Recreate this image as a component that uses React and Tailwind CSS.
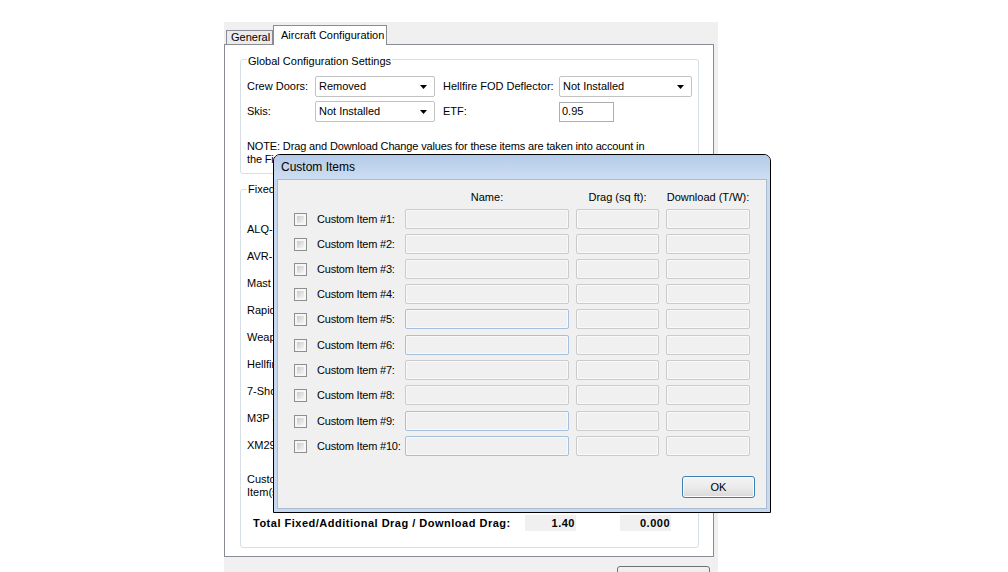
import React from 'react'

const fixedItems = [
  'ALQ-144 IR Jammer:',
  'AVR-2 Laser Detecting Set:',
  'Mast Mounted Sight:',
  'Rapid Deployment Kit:',
  'Weapon Pylons:',
  'Hellfire Launcher(s):',
  '7-Shot Rocket Pod(s):',
  'M3P and Ammunition:',
  'XM296 .50 Cal Gun:',
]

const customItems = Array.from({ length: 10 }, (_, i) => `Custom Item #${i + 1}:`)

function Arrow() {
  return (
    <svg width="7" height="4" viewBox="0 0 7 4">
      <path d="M0 0h7L3.5 4z" fill="#000" />
    </svg>
  )
}

function Combo({ value, width }) {
  return (
    <div className={`flex h-[21px] items-center justify-between rounded-[2px] border border-[#c2c2c2] bg-white pl-[3px] pr-[7px] ${width}`}>
      <span>{value}</span>
      <Arrow />
    </div>
  )
}

function Checkbox() {
  return (
    <div className="h-[13px] w-[13px] shrink-0 border border-[#8e8f8f] bg-[#f6f6f6] p-[2px]">
      <div className="h-full w-full bg-linear-to-br from-[#cbcbcb] to-[#f6f6f6]" />
    </div>
  )
}

function Field({ width, blue }) {
  return (
    <div
      className={`h-[20px] shrink-0 rounded-[2px] border bg-[#f0f0f0] shadow-[inset_0_0_0_1px_#f9f9f9] ${width} ${
        blue ? 'border-[#a3c0de]' : 'border-[#cbcbcb]'
      }`}
    />
  )
}

export default function App() {
  return (
    <div className="relative h-[572px] w-[1008px] overflow-hidden bg-white pl-[224px] pt-[22px] font-['Liberation_Sans',Arial,sans-serif] text-[11px] leading-[13px] text-black">
      {/* main window */}
      <div className="flex w-[494px] flex-col bg-[#f0f0f0]">
        <div className="flex h-[22px] shrink-0 items-end pl-[2px]">
          <div className="flex h-[14px] w-[47px] items-center border border-b-0 border-[#898c95] bg-[#ebebeb] pl-[4px]">
            General
          </div>
          <div className="relative z-10 -mb-[1px] h-[20px] w-[114px] border border-b-0 border-[#898c95] bg-white pl-[7px] pt-[3px]">
            Aircraft Configuration
          </div>
        </div>

        <div className="h-[513px] w-[490px] shrink-0 border border-[#898c95] bg-white px-[15px] pt-[8px]">
          <fieldset className="h-[121px] w-[459px] rounded-[3px] border border-[#d5dfe5] px-[6px] pt-[10px]">
            <legend className="px-[1px]">
              <span className="relative top-[2px]">Global Configuration Settings</span>
            </legend>
            <div className="flex h-[21px] items-center">
              <span className="w-[68px]">Crew Doors:</span>
              <Combo value="Removed" width="w-[120px]" />
              <span className="ml-[8px] w-[116px]">Hellfire FOD Deflector:</span>
              <Combo value="Not Installed" width="w-[133px]" />
            </div>
            <div className="mt-[4px] flex h-[21px] items-center">
              <span className="w-[68px]">Skis:</span>
              <Combo value="Not Installed" width="w-[120px]" />
              <span className="ml-[8px] w-[116px]">ETF:</span>
              <div className="flex h-[20px] w-[55px] items-center border border-[#abadb3] bg-white pl-[2px]">0.95</div>
            </div>
            <p className="mt-[18px] w-[405px] tracking-[-0.14px]">
              NOTE: Drag and Download Change values for these items are taken into account in the Fixed/Additional Drag totals.
            </p>
          </fieldset>

          <fieldset className="mt-[9px] h-[365px] w-[459px] rounded-[3px] border border-[#d5dfe5] px-[6px] pt-[20px]">
            <legend className="px-[1px]">Fixed/Additional Items</legend>
            {fixedItems.map((item) => (
              <div key={item} className="flex h-[27px] items-center">
                {item}
              </div>
            ))}
            <div className="mt-[14px] w-[60px]">
              <div>Custom</div>
              <div>Item(s):</div>
            </div>
            <div className="mt-[16px] flex h-[16px] items-center pl-[6px] font-bold tracking-[0.5px]">
              <span className="w-[272px]">Total Fixed/Additional Drag / Download Drag:</span>
              <span className="flex h-[16px] w-[51px] items-center justify-end bg-[#f0f0f0] pr-[1px]">1.40</span>
              <span className="ml-[44px] flex h-[16px] w-[51px] items-center justify-end bg-[#f0f0f0] pr-[1px]">0.000</span>
            </div>
          </fieldset>
        </div>

        <div className="h-[15px] shrink-0">
          <div className="ml-[393px] mt-[9px] h-[20px] w-[93px] rounded-[3px] border border-[#707070] bg-linear-to-b from-[#f2f2f2] to-[#dcdcdc]" />
        </div>
      </div>

      {/* Custom Items dialog */}
      <div className="absolute left-[273px] top-[154px] flex h-[359px] w-[498px] flex-col rounded-t-[7px] border border-black bg-[#c6d9ef]">
        <div className="flex h-[24px] items-center rounded-t-[6px] bg-linear-to-b from-[#b4cbe8] to-[#cddef2] pl-[7px] pt-[1px] text-[12px]">
          Custom Items
        </div>
        <div className="mx-[3px] mb-[3px] flex flex-1 flex-col border border-[#a9bcd4] bg-[#f0f0f0]">
          <div className="flex pl-[16px] pt-[11px]">
            <div className="w-[111px]" />
            <div className="w-[164px] text-center">Name:</div>
            <div className="ml-[7px] w-[83px] text-center">Drag (sq ft):</div>
            <div className="ml-[7px] w-[84px] text-center">Download (T/W):</div>
          </div>
          {customItems.map((item, i) => (
            <div
              key={item}
              className={`flex h-[20px] items-center pl-[16px] ${i === 5 || i === 8 ? 'mt-[6px]' : 'mt-[5px]'}`}
            >
              <Checkbox />
              <span className="ml-[10px] w-[88px] tracking-[-0.2px]">{item}</span>
              <Field width="w-[164px]" blue={i === 4 || i === 5 || i === 8 || i === 9} />
              <div className="ml-[7px]">
                <Field width="w-[83px]" />
              </div>
              <div className="ml-[7px]">
                <Field width="w-[84px]" />
              </div>
            </div>
          ))}
          <div className="flex flex-1 items-end justify-end pb-[10px] pr-[11px]">
            <div className="flex h-[22px] w-[73px] items-center justify-center rounded-[3px] border border-[#3c7fb1] bg-linear-to-b from-[#f4f4f4] via-[#ebebeb] to-[#d9d9d9] shadow-[inset_0_0_0_1px_#fcfcfc]">
              OK
            </div>
          </div>
        </div>
      </div>
    </div>
  )
}
